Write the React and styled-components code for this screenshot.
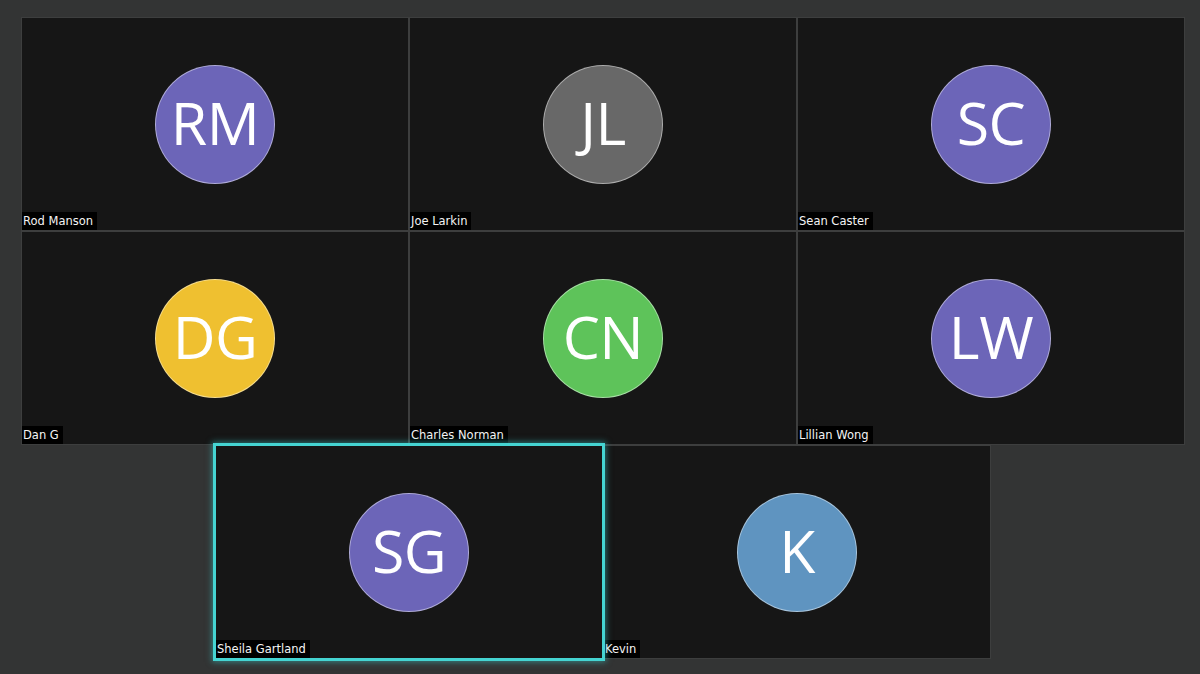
import React from 'react';
import styled, { createGlobalStyle } from 'styled-components';

const GlobalStyle = createGlobalStyle`
  html, body {
    margin: 0;
    padding: 0;
    background: #333434;
  }
  body {
    width: 1200px;
    height: 674px;
    overflow: hidden;
  }
`;

const Stage = styled.div`
  width: 1200px;
  height: 674px;
  box-sizing: border-box;
  padding: 18px 16px 0 22px;
  background: #333434;
  display: flex;
  flex-direction: column;
  gap: 2px;
`;

const Row = styled.div`
  display: flex;
  gap: 2px;
  justify-content: center;
  width: 1162px;
`;

const Tile = styled.div`
  position: relative;
  width: 386px;
  height: 212px;
  box-sizing: border-box;
  background: #161616;
  outline: 1px solid #3d3e3e;
  display: flex;
  align-items: center;
  justify-content: center;
  z-index: ${p => (p.$speaking ? 2 : 1)};
  ${p =>
    p.$speaking &&
    `
    outline: 3px solid #45d4d2;
    outline-offset: 0px;
    box-shadow: 0 0 6px 4px rgba(60, 210, 210, 0.5);
  `}
`;

const Avatar = styled.div`
  width: 120px;
  height: 119px;
  border-radius: 50%;
  background: ${p => p.$color};
  border: 1px solid rgba(255, 255, 255, 0.45);
  display: flex;
  align-items: center;
  justify-content: center;
  color: #ffffff;
  font-family: 'Open Sans', 'Noto Sans', sans-serif;
  font-size: 59px;
  font-weight: 400;
  letter-spacing: -0.5px;
  line-height: 1;
  padding-bottom: 3px;
  box-sizing: border-box;
`;

const NameTag = styled.span`
  position: absolute;
  left: 0;
  bottom: 0;
  background: #000;
  color: #f4f4f4;
  font-family: 'DejaVu Sans', Verdana, sans-serif;
  font-size: 11.5px;
  line-height: 18px;
  padding: 0 4px 0 1px;
`;

const people = [
  [
    { name: 'Rod Manson', initials: 'RM', color: '#6c65b8' },
    { name: 'Joe Larkin', initials: 'JL', color: '#686868' },
    { name: 'Sean Caster', initials: 'SC', color: '#6c65b8' },
  ],
  [
    { name: 'Dan G', initials: 'DG', color: '#efc030' },
    { name: 'Charles Norman', initials: 'CN', color: '#5ec35a' },
    { name: 'Lillian Wong', initials: 'LW', color: '#6c65b8' },
  ],
  [
    { name: 'Sheila Gartland', initials: 'SG', color: '#6c65b8', speaking: true },
    { name: 'Kevin', initials: 'K', color: '#5f94c0' },
  ],
];

export default function App() {
  return (
    <>
      <GlobalStyle />
      <Stage>
        {people.map((row, i) => (
          <Row key={i}>
            {row.map(p => (
              <Tile key={p.name} $speaking={p.speaking}>
                <Avatar $color={p.color}>{p.initials}</Avatar>
                <NameTag>{p.name}</NameTag>
              </Tile>
            ))}
          </Row>
        ))}
      </Stage>
    </>
  );
}
